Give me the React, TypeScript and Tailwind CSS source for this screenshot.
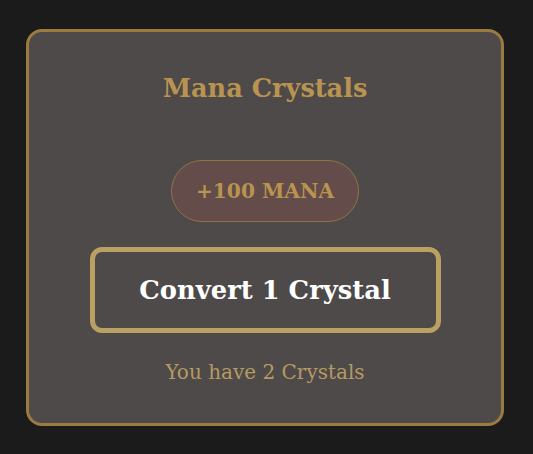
export default function App() {
  return (
    <div className="min-h-screen bg-[#1b1b1b] pt-[29px] pl-[26px]" style={{ minHeight: 454 }}>
      <div
        className="w-[478px] h-[397px] rounded-[16px] border-[3px] border-[#9c7b3f] bg-[#4e4a49] flex flex-col items-center pt-[38px]"
        style={{ fontFamily: '"DejaVu Serif", "Liberation Serif", serif' }}
      >
        <h1 className="text-[25.6px] leading-[36px] font-bold text-[#b99450]">Mana Crystals</h1>

        <div className="mt-[54px] h-[62px] w-[188px] rounded-full border border-[#8f7444] bg-[#644c4a] flex items-center justify-center">
          <span className="text-[20.2px] font-bold text-[#b99450]">+100 MANA</span>
        </div>

        <button className="mt-[25px] h-[86px] w-[351px] rounded-[12px] border-[5px] border-[#bba063] bg-transparent flex items-center justify-center">
          <span className="text-[25.8px] font-bold text-white">Convert 1 Crystal</span>
        </button>

        <p className="mt-[25px] text-[20px] leading-[28px] text-[#b59a62]">You have 2 Crystals</p>
      </div>
    </div>
  );
}
